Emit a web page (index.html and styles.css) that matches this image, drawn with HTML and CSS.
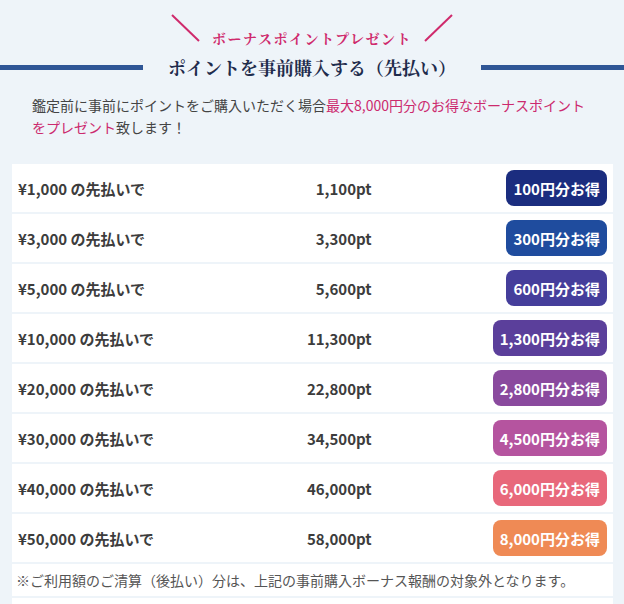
FILE: index.html
```html
<!DOCTYPE html>
<html lang="ja">
<head>
<meta charset="utf-8">
<link rel="stylesheet" href="styles.css">
</head>
<body>
<section class="prepay">
  <div class="sub-head">
    <svg class="slash" width="30" height="28" viewBox="0 0 30 28"><line x1="1" y1="1" x2="28" y2="27" /></svg>
    <span class="sub-text">ボーナスポイントプレゼント</span>
    <svg class="slash" width="30" height="28" viewBox="0 0 30 28"><line x1="29" y1="1" x2="2" y2="27" /></svg>
  </div>
  <h2 class="title"><span class="rule"></span><span class="title-text">ポイントを事前購入する（先払い）</span><span class="rule"></span></h2>
  <p class="lead">鑑定前に事前にポイントをご購入いただく場合<span class="accent">最大8,000円分のお得なボーナスポイント</span><span class="accent">をプレゼント</span>致します！</p>

  <div class="table">
    <div class="row"><span class="label">¥1,000 の先払いで</span><span class="pts">1,100pt</span><span class="cell-badge"><span class="badge b1">100円分お得</span></span></div>
    <div class="row"><span class="label">¥3,000 の先払いで</span><span class="pts">3,300pt</span><span class="cell-badge"><span class="badge b2">300円分お得</span></span></div>
    <div class="row"><span class="label">¥5,000 の先払いで</span><span class="pts">5,600pt</span><span class="cell-badge"><span class="badge b3">600円分お得</span></span></div>
    <div class="row"><span class="label">¥10,000 の先払いで</span><span class="pts">11,300pt</span><span class="cell-badge"><span class="badge b4">1,300円分お得</span></span></div>
    <div class="row"><span class="label">¥20,000 の先払いで</span><span class="pts">22,800pt</span><span class="cell-badge"><span class="badge b5">2,800円分お得</span></span></div>
    <div class="row"><span class="label">¥30,000 の先払いで</span><span class="pts">34,500pt</span><span class="cell-badge"><span class="badge b6">4,500円分お得</span></span></div>
    <div class="row"><span class="label">¥40,000 の先払いで</span><span class="pts">46,000pt</span><span class="cell-badge"><span class="badge b7">6,000円分お得</span></span></div>
    <div class="row"><span class="label">¥50,000 の先払いで</span><span class="pts">58,000pt</span><span class="cell-badge"><span class="badge b8">8,000円分お得</span></span></div>
    <div class="note">※ご利用額のご清算（後払い）分は、上記の事前購入ボーナス報酬の対象外となります。</div>
    <div class="note empty"></div>
  </div>
</section>
</body>
</html>
```

FILE: styles.css
```css
html, body {
  margin: 0;
  padding: 0;
  background: #eef4f9;
}
body {
  font-family: "Noto Sans CJK JP", "Noto Sans", sans-serif;
  color: #444;
  overflow: hidden;
}
.prepay {
  padding-top: 14px;
}
.sub-head {
  display: flex;
  justify-content: center;
  align-items: flex-end;
  gap: 11px;
  height: 28px;
}
.slash line {
  stroke: #cf2a6c;
  stroke-width: 2;
}
.sub-text {
  font-family: "Noto Serif CJK JP", "Noto Sans CJK JP", serif;
  font-weight: 700;
  font-size: 14px;
  letter-spacing: 1.5px;
  color: #cf2a6c;
  line-height: 20px;
  margin-bottom: -6px;
}
.title {
  display: flex;
  align-items: center;
  margin: 9px 0 0;
  height: 32px;
}
.rule {
  flex: 1;
  height: 5px;
  background: #2f5696;
}
.title-text {
  font-family: "Noto Serif CJK JP", "Noto Sans CJK JP", serif;
  font-weight: 700;
  font-size: 18px;
  color: #1f2c4c;
  padding: 0 25px;
  line-height: 24px;
}
.lead {
  margin: 11px 0 0;
  padding: 0 32px;
  font-size: 14px;
  line-height: 22px;
  color: #444;
}
.accent {
  color: #cc2a6e;
}
.table {
  margin: 26px 11px 0 12px;
  display: flex;
  flex-direction: column;
  gap: 2px;
}
.row {
  display: grid;
  grid-template-columns: 40% 20% 40%;
  align-items: center;
  height: 48px;
  background: #fff;
  font-size: 15px;
  font-weight: 700;
  color: #3c3c3c;
}
.label {
  padding-left: 6px;
}
.pts {
  text-align: right;
  padding-right: 1px;
}
.cell-badge {
  display: flex;
  justify-content: flex-end;
  padding-right: 6px;
}
.badge {
  display: inline-flex;
  align-items: center;
  height: 36px;
  padding: 0 7px;
  border-radius: 8px;
  color: #fff;
  font-size: 15px;
  font-weight: 700;
}
.b1 { background: #1b2d7f; }
.b2 { background: #1f4c9e; }
.b3 { background: #453e9b; }
.b4 { background: #5b3f9b; }
.b5 { background: #8a4a9e; }
.b6 { background: #b5549f; }
.b7 { background: #e8687b; }
.b8 { background: #ef8a55; }
.note {
  background: #fff;
  height: 32px;
  display: flex;
  align-items: center;
  padding-left: 4px;
  font-size: 14px;
  color: #555;
}
.note.empty {
  height: 20px;
}
```
